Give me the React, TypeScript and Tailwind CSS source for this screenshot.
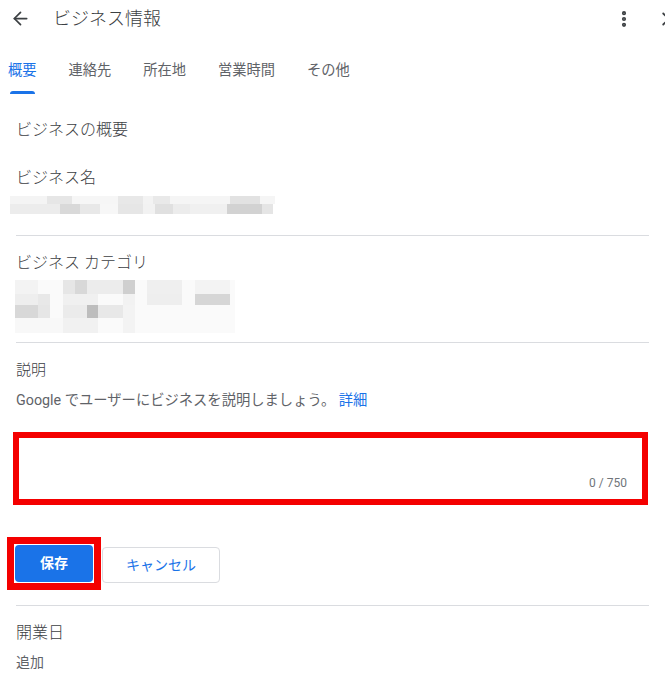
import { ArrowLeft, ChevronRight, MoreVertical } from "lucide-react";

const tabs = ["概要", "連絡先", "所在地", "営業時間", "その他"];

// pixelated (redacted) business name
const nameBlocks: [number, number, number, number, string][] = [
    [10, 2, 37, 8, "#f4f4f4"],
    [47, 2, 25, 8, "#e6e6e6"],
    [72, 2, 46, 8, "#f6f6f6"],
    [118, 2, 25, 8, "#e8e8e8"],
    [143, 2, 10, 8, "#f3f3f3"],
    [153, 2, 17, 8, "#e9e9e9"],
    [170, 2, 60, 8, "#f5f5f5"],
    [230, 2, 30, 8, "#e2e2e2"],
    [260, 2, 15, 8, "#f5f5f5"],
    [10, 10, 50, 10, "#ececec"],
    [60, 10, 20, 10, "#d9d9d9"],
    [80, 10, 20, 10, "#e8e8e8"],
    [100, 10, 18, 10, "#f7f7f7"],
    [118, 10, 25, 10, "#e6e6e6"],
    [143, 10, 12, 10, "#f2f2f2"],
    [155, 10, 18, 10, "#e0e0e0"],
    [173, 10, 17, 10, "#ececec"],
    [190, 10, 37, 10, "#f0f0f0"],
    [227, 10, 35, 10, "#d2d2d2"],
    [262, 10, 11, 10, "#e5e5e5"],
];

// pixelated (redacted) category
const categoryBlocks: [number, number, number, number, string][] = [
    [15, 2, 220, 53, "#fafafa"],
    [15, 2, 23, 14, "#f3f3f3"],
    [63, 2, 12, 14, "#e6e6e6"],
    [75, 2, 12, 14, "#d8d8d8"],
    [87, 2, 36, 14, "#ececec"],
    [123, 2, 12, 14, "#cfcfcf"],
    [147, 2, 35, 14, "#efefef"],
    [195, 2, 35, 14, "#f3f3f3"],
    [15, 16, 23, 11, "#eeeeee"],
    [38, 16, 12, 11, "#e8e8e8"],
    [63, 16, 35, 11, "#f0f0f0"],
    [123, 16, 12, 11, "#f2f2f2"],
    [147, 16, 35, 11, "#eeeeee"],
    [195, 16, 35, 11, "#d6d6d6"],
    [15, 27, 23, 13, "#d8d8d8"],
    [38, 27, 12, 13, "#e6e6e6"],
    [63, 27, 24, 13, "#ebebeb"],
    [87, 27, 11, 13, "#bdbdbd"],
    [98, 27, 25, 13, "#e8e8e8"],
    [123, 27, 12, 13, "#f3f3f3"],
    [15, 40, 48, 15, "#f8f8f8"],
    [63, 40, 35, 15, "#f1f1f1"],
    [123, 40, 12, 15, "#f3f3f3"],
];

function Mosaic({ blocks, w, h }: { blocks: [number, number, number, number, string][]; w: number; h: number }) {
    return (
        <svg width={w} height={h} className="block -ml-4">
            {blocks.map(([x, y, bw, bh, c], i) => (
                <rect key={i} x={x} y={y} width={bw} height={bh} fill={c} />
            ))}
        </svg>
    );
}

export default function App() {
    return (
        <div
            className="w-[665px] h-[684px] overflow-hidden bg-white text-[#3c4043]"
            style={{ fontFamily: 'Roboto, "Noto Sans CJK JP", sans-serif' }}
        >
            {/* Header */}
            <div className="h-[37px] flex items-center pl-[10px]">
                <ArrowLeft size={21} strokeWidth={2} className="text-[#3c4043]" />
                <span className="ml-[22px] text-[18px] font-light text-[#3c4043]">ビジネス情報</span>
                <div className="ml-auto flex items-center">
                    <MoreVertical size={20} strokeWidth={3} className="text-[#3c4043] mr-[21px]" />
                    <ChevronRight size={22} strokeWidth={2} className="text-[#3c4043] -mr-[12px]" />
                </div>
            </div>

            {/* Tabs */}
            <div className="h-[57px] flex items-end gap-8 pl-[8px]">
                {tabs.map((t, i) => (
                    <div key={t} className="flex flex-col items-center">
                        <span className={"text-[14.25px] leading-[20px] " + (i === 0 ? "text-[#1a73e8]" : "text-[#5f6368]")}>
                            {t}
                        </span>
                        <div className={"mt-[11px] h-[3px] w-[25px] rounded-t-sm " + (i === 0 ? "bg-[#1a73e8]" : "bg-transparent")} />
                    </div>
                ))}
            </div>

            <div className="px-4">
                <div className="mt-[24px] text-[16px] leading-[24px] font-light">ビジネスの概要</div>

                <div className="mt-[24px] text-[16px] leading-[24px] font-light">ビジネス名</div>
                <div className="mt-[4px]">
                    <Mosaic blocks={nameBlocks} w={280} h={22} />
                </div>
                <div className="mt-[19px] h-px bg-[#dadce0]" />

                <div className="mt-[15px] text-[16px] leading-[24px] font-light">ビジネス カテゴリ</div>
                <div className="mt-[3px]">
                    <Mosaic blocks={categoryBlocks} w={240} h={56} />
                </div>
                <div className="mt-[8px] h-px bg-[#dadce0]" />

                <div className="mt-[16px] text-[15px] leading-[22px] font-light">説明</div>
                <div className="mt-[9px] text-[14.3px] leading-[20px] text-[#5f6368]">
                    Google でユーザーにビジネスを説明しましょう。 <span className="text-[#1a73e8]">詳細</span>
                </div>

                {/* Description field */}
                <div className="mt-[22px] -ml-[3px] w-[635px] h-[73px] border-[6px] border-[#f40000] flex items-end justify-end pr-[15px] pb-[9px]">
                    <span className="text-[12px] leading-[14px] text-[#70757a]">0 / 750</span>
                </div>

                {/* Buttons */}
                <div className="mt-[32px] -ml-[9px] flex items-start">
                    <div className="border-[7px] border-[#f40000] p-px">
                        <button className="w-[78px] h-[37px] rounded bg-[#1a73e8] text-white text-[14px] font-bold">保存</button>
                    </div>
                    <button className="mt-[10px] ml-[1px] w-[118px] h-[36px] rounded border border-[#dadce0] text-[#1a73e8] text-[14px]">
                        キャンセル
                    </button>
                </div>
                <div className="mt-[15px] h-px bg-[#dadce0]" />

                <div className="mt-[15px] text-[16px] leading-[24px] font-light">開業日</div>
                <div className="mt-[7px] text-[14px] leading-[20px] text-[#5f6368]">追加</div>
            </div>
        </div>
    );
}
